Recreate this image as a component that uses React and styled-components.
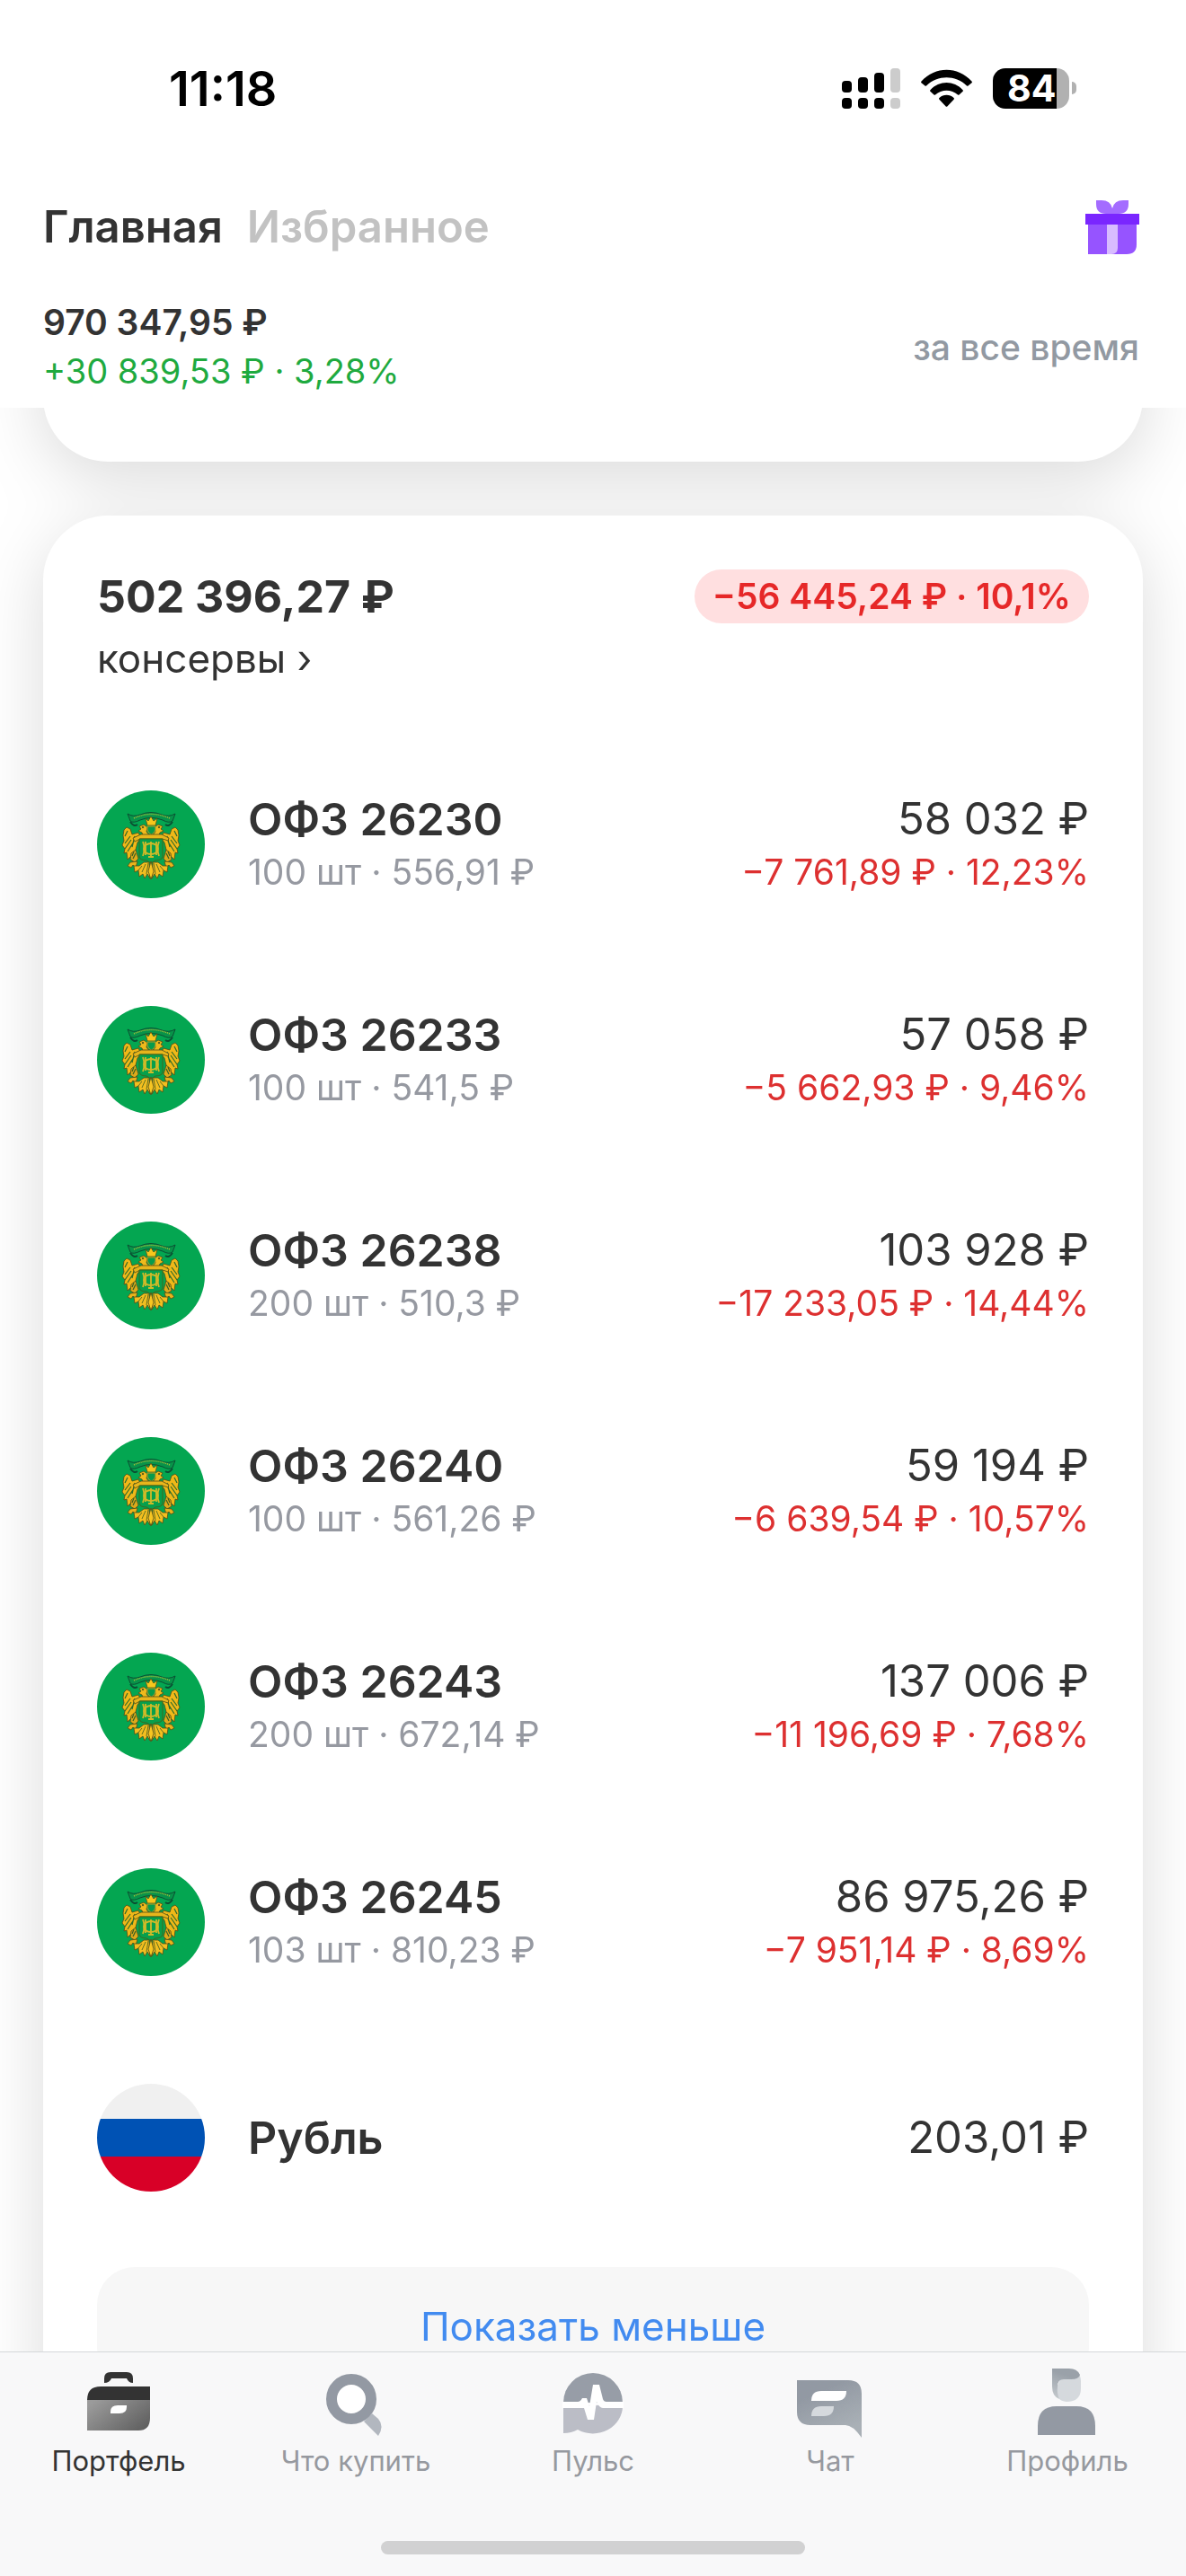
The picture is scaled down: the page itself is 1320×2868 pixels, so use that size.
import styled, { createGlobalStyle } from 'styled-components';

const GlobalStyle = createGlobalStyle`
	* {
		box-sizing: border-box;
	}
	body {
		margin: 0;
		background-color: #ffffff;
		color: #333333;
		font-family: Inter, 'Liberation Sans', sans-serif;
		-webkit-font-smoothing: antialiased;
	}
	button {
		border: none;
		padding: 0;
		background: none;
		color: inherit;
		font: inherit;
		cursor: pointer;
	}
`;

const Screen = styled.div`
	height: 100vh;
	display: flex;
	flex-direction: column;
	overflow: hidden;
`;

const Header = styled.header`
	flex: none;
	padding: 68px 52px 14px 48px;
`;

const StatusBar = styled.div`
	height: 60px;
	padding: 0 70px 0 140px;
	display: flex;
	align-items: center;
	justify-content: space-between;
`;

const Time = styled.time`
	color: #000000;
	font-size: 54px;
	font-weight: 600;
`;

const StatusIcons = styled.div`
	display: flex;
	align-items: center;
	gap: 23px;
`;

const BatteryBox = styled.div`
	display: flex;
	align-items: center;
	gap: 3px;
`;

const BatteryLevel = styled.div`
	width: 85px;
	height: 45px;
	padding-left: 16px;
	border-radius: 14px;
	background: linear-gradient(to right, #000000 84%, #b1b1b1 84%);
	color: #ffffff;
	font-size: 41px;
	font-weight: 700;
	line-height: 45px;
`;

const BatteryNub = styled.div`
	width: 5px;
	height: 14px;
	border-radius: 0 5px 5px 0;
	background-color: #b1b1b1;
`;

const HeaderRow = styled.div`
	margin-top: ${(props) => props.$top}px;
	display: flex;
	align-items: center;
	justify-content: space-between;
`;

const Tabs = styled.div`
	display: flex;
	gap: 27px;
`;

const TabButton = styled.button`
	color: ${(props) => (props.$active ? '#333333' : '#c2c2c2')};
	font-size: 49px;
	font-weight: 600;
	line-height: 60px;
`;

const GiftButton = styled.button`
	width: 60px;
	height: 60px;
`;

const Total = styled.div`
	color: ${(props) => (props.$profit ? '#1faa3f' : '#333333')};
	font-size: ${(props) => (props.$profit ? 38 : 39)}px;
	font-weight: ${(props) => (props.$profit ? 400 : 600)};
	line-height: 54px;
`;

const PeriodButton = styled.button`
	color: #9299a2;
	font-size: 39px;
	font-weight: 500;
`;

const Feed = styled.main`
	flex: 1;
	min-height: 0;
	overflow: hidden;
`;

const Cards = styled.div`
	padding: 0 48px;
	display: flex;
	flex-direction: column;
	gap: 60px;
	filter: drop-shadow(0 18px 36px rgba(0, 0, 0, 0.14));
`;

const Card = styled.section`
	padding: 60px;
	border-radius: 72px;
	background-color: #ffffff;
`;

/* the previous card, mostly scrolled away under the header */
const ScrolledCard = styled(Card)`
	height: 240px;
	margin-top: -180px;
`;

const CardHead = styled.div`
	display: flex;
	align-items: center;
	justify-content: space-between;
`;

const CardTotal = styled.h2`
	margin: 0;
	font-size: 50px;
	font-weight: 700;
	line-height: 60px;
`;

const Badge = styled.div`
	padding: 0 20px;
	border-radius: 30px;
	background-color: #ffdfe0;
	color: #e62828;
	font-size: 39px;
	font-weight: 600;
	line-height: 60px;
`;

const AccountLink = styled.a`
	display: block;
	width: fit-content;
	margin: 12px 0 60px;
	color: #333333;
	font-size: 44px;
	line-height: 54px;
	text-decoration: none;
`;

const Positions = styled.ul`
	margin: 0;
	padding: 0;
	list-style: none;
`;

const Position = styled.li`
	height: 240px;
	display: flex;
	align-items: center;
	gap: 48px;
`;

const PositionText = styled.div`
	flex: ${(props) => (props.$right ? 'none' : 1)};
	text-align: ${(props) => (props.$right ? 'right' : 'left')};
`;

const Primary = styled.div`
	font-size: ${(props) => (props.$bold ? 50 : 49)}px;
	font-weight: ${(props) => (props.$bold ? 600 : 400)};
	line-height: 62px;
`;

const Secondary = styled.div`
	color: ${(props) => (props.$loss ? '#dd3030' : '#9699a1')};
	font-size: 39px;
	line-height: 56px;
`;

const MoreButton = styled.button`
	width: 100%;
	height: 132px;
	margin-top: 24px;
	border-radius: 42px;
	background-color: #f7f7f7;
	color: #428bf0;
	font-size: 44px;
`;

const BottomBar = styled.nav`
	flex: none;
	padding: 11px 0 24px;
	border-top: 1px solid #d5d8da;
	background-color: #f8f8f9;
`;

const NavItems = styled.div`
	display: grid;
	grid-template-columns: repeat(5, 1fr);
`;

const NavButton = styled.button`
	display: flex;
	flex-direction: column;
	align-items: center;
	gap: 8px;
	color: ${(props) => (props.$active ? '#333333' : '#96999f')};
	font-size: 31px;
	line-height: 36px;
`;

const HomeIndicator = styled.div`
	width: 36%;
	max-width: 472px;
	height: 15px;
	margin: 71px auto 0;
	border-radius: 8px;
	background-color: #d1d1d2;
`;

const SignalIcon = () => (
	<svg width="65" height="45" viewBox="0 0 65 45">
		<g fill="#000">
			<rect x="0" y="14" width="11" height="13" rx="4" />
			<rect x="18" y="10" width="11" height="17" rx="4" />
			<rect x="36" y="5" width="11" height="22" rx="4" />
			<rect x="0" y="33" width="11" height="12" rx="4" />
			<rect x="18" y="33" width="11" height="12" rx="4" />
			<rect x="36" y="33" width="11" height="12" rx="4" />
		</g>
		<g fill="#ccc">
			<rect x="54" y="0" width="11" height="27" rx="4" />
			<rect x="54" y="33" width="11" height="12" rx="4" />
		</g>
	</svg>
);

const WifiIcon = () => (
	<svg width="57" height="43" viewBox="0 0 57 43">
		<path d="M0.5 13.5C16 -3.6 41 -3.6 56.5 13.5Q57.3 14.4 56.5 15.2L52.5 18.6Q51.8 19.2 51 18.4C38 6.3 19 6.3 6 18.4Q5.2 19.2 4.5 18.6L0.5 15.2Q-0.3 14.4 0.5 13.5Z" />
		<path d="M10.4 23.2C20.5 12.4 36.5 12.4 46.6 23.2Q47.4 24 46.6 24.8L42.5 28.5Q41.7 29.1 41 28.5C34 22 23 22 16 28.5Q15.3 29.1 14.5 28.5L10.4 24.8Q9.6 24 10.4 23.2Z" />
		<path d="M20.4 32C25 27.7 32 27.7 36.6 32Q37.4 32.9 36.6 33.7L29.3 41.5Q28.5 42.2 27.7 41.5L20.4 33.7Q19.6 32.9 20.4 32Z" />
	</svg>
);

const GiftIcon = () => (
	<svg width="60" height="60" viewBox="0 0 60 60">
		<path fill="#a46cff" d="M12 0h6q10 0 12 9q2 -9 12 -9h6v4q0 11 -11 11H23Q12 15 12 4z" />
		<path fill="#7a26ff" d="M0 15h60v12H0z" />
		<path fill="#9654ff" d="M3 27h54v22q0 11 -11 11H3z" />
		<path fill="#d8bcff" d="M24 27h12v26q0 7 -7 7h-5z" />
	</svg>
);

const EmblemIcon = () => (
	<svg width="120" height="120" viewBox="0 0 120 120">
		<circle cx="60" cy="60" r="60" fill="#04a651" />
		<path
			d="M34 26Q40 30 48 27Q60 22 72 27Q80 30 87 26L84 34Q80 37 73 33Q60 28 48 33Q40 37 37 34Z"
			fill="#089349"
			stroke="#0b4f33"
			strokeWidth="1"
		/>
		<path d="M41 31Q60 22 81 31" fill="none" stroke="#9dbb3a" strokeWidth="1.4" strokeDasharray="1.2 0.8" />
		<path d="M37 35q4 6 8 3M84 35q-4 6 -8 3" fill="none" stroke="#0b4f33" strokeWidth="2" />
		{/* wings are drawn once and mirrored */}
		{[1, -1].map((side) => (
			<g key={side} transform={`translate(60 0) scale(${side} 1)`} stroke="#514b16" strokeWidth="0.8">
				<path fill="#f0b818" d="M11 53L14 47L21 49L23 43L27 41L30 44L31 50L30 56L32 61L29 65L30 70L27 69L26 77L20 71L17 66L15 58Z" />
				<path fill="none" stroke="#2f6b29" strokeWidth="1.2" d="M23 51L29 59M22 55L29 65M19 57L26 68M26 45L29 51M18 51L21 63" />
				<path fill="#dda91b" d="M17 66L22 70L23 77L18 80L14 76Z" />
				<path fill="#e9b31a" d="M15 79L23 80L26 84L22 86L20 83L17 86Z" />
				<path fill="none" stroke="#385f22" strokeWidth="1.2" d="M17 70L20 76M19 68L21 73" />
				<path fill="#efba1c" d="M1 51L5 46L4 41L8 38L13 40L11 43L14 45L10 47L8 52Z" />
				<circle cx="9" cy="41" r="0.8" fill="#165b2c" />
				<path fill="#f2be20" d="M2 80L8 80L13 84L19 84L18 91L14 89L13 96L9 93L7 98L4 93L1 98Z" />
				<path fill="none" stroke="#3c5b20" d="M3 81L5 93M6 82L10 91M10 84L14 89" />
			</g>
		))}
		<path fill="#f6c71c" stroke="#534f14" strokeWidth="0.8" d="M54 31L57 34L60 29L63 34L67 31L65 39H56Z" />
		<path fill="#079b4c" stroke="#b99d24" d="M56 40h9v4q-1 4 -4.5 5q-3.5 -1 -4.5 -5z" />
		<path fill="#e7b51c" stroke="#514b16" strokeWidth="0.8" d="M40 53L49 49H72L80 53L79 56L73 54H48L42 57Z" />
		<path fill="#079f4c" stroke="#3f661d" strokeWidth="1" d="M47 54h26v20q-1 4 -8 4l-5 3l-5 -3q-7 0 -8 -4z" />
		<g fill="none" stroke="#d0ba28" strokeWidth="1.8">
			<ellipse cx="60" cy="65" rx="8" ry="6" />
			<path d="M60 57v18M54 57v15M66 57v15M51 57q3 8 0 16M69 57q-3 8 0 16M57 74h6" />
		</g>
		<path fill="#f7c521" stroke="#4f4d16" strokeWidth="0.8" d="M60 79L63 90L60 99L57 90Z" />
	</svg>
);

const FlagIcon = () => (
	<svg width="120" height="120" viewBox="0 0 120 120">
		<clipPath id="flag">
			<circle cx="60" cy="60" r="60" />
		</clipPath>
		<g clipPath="url(#flag)">
			<path fill="#f0f0f0" d="M0 0h120v39H0z" />
			<path fill="#0052b4" d="M0 39h120v42H0z" />
			<path fill="#d80027" d="M0 81h120v39H0z" />
		</g>
	</svg>
);

const PortfolioIcon = () => (
	<svg width="84" height="84" viewBox="0 0 84 84">
		<linearGradient id="case" x1="0" y1="0.2" x2="1" y2="0.8">
			<stop offset="0" stopColor="#9b9b9b" />
			<stop offset="1" stopColor="#606060" />
		</linearGradient>
		<path fill="#333" d="M26 23v-5q0 -7 7 -7h18q7 0 7 7v5q-5 0 -7 -5H34q-2 5 -8 5z" />
		<path fill="#333" d="M7 42q0 -15 15 -15h55v15z" />
		<path fill="url(#case)" d="M7 42h70v20q0 14 -13 14H7z" />
		<path fill="#fff" d="M33 57v-2q0 -7 8 -7h10v2q0 7 -8 7z" />
	</svg>
);

const SearchIcon = () => (
	<svg width="84" height="84" viewBox="0 0 84 84">
		<path fill="#b2b7bf" d="M51 66L60 57L67 63Q74 71 67 82Z" />
		<circle cx="37" cy="41" r="22" fill="#fff" stroke="#9399a3" strokeWidth="12" />
	</svg>
);

const PulseIcon = () => (
	<svg width="84" height="84" viewBox="0 0 84 84">
		<path fill="#979da7" d="M9 45A33 33 0 0 1 75 45z" />
		<path fill="#bbbdc6" d="M9 48h66A33 31 0 0 1 25 75Q18 79 9 79z" />
		<path
			fill="#fff"
			d="M8 44H25Q28 44 30 40H35L38 49L42 25H49L53 41Q54 44 57 44H76V51H53Q49 51 46 44L43 64H36L32 51H8z"
		/>
	</svg>
);

const ChatIcon = () => (
	<svg width="84" height="84" viewBox="0 0 84 84">
		<linearGradient id="chat" x1="0" y1="0" x2="0.5" y2="1">
			<stop offset="0.3" stopColor="#9299a3" />
			<stop offset="1" stopColor="#a9b0b6" />
		</linearGradient>
		<path fill="url(#chat)" d="M5 20h57q15 0 15 15v49Q67 70 59 70H20Q5 70 5 55z" />
		<path fill="#fff" d="M21 43q0 -11 11 -11h28q0 11 -11 11z" />
		<path fill="#d5d9dd" d="M21 60q0 -11 11 -11h14q0 11 -11 11z" />
	</svg>
);

const ProfileIcon = () => (
	<svg width="84" height="84" viewBox="0 0 84 84">
		<linearGradient id="hair" x1="0.5" y1="0" x2="0.2" y2="1">
			<stop offset="0.2" stopColor="#9aa1a9" />
			<stop offset="1" stopColor="#c3c8cc" />
		</linearGradient>
		<path fill="#d5d9dd" d="M40 9q17 -1 17 12v8q0 15 -16 15q-12 -1 -12 -15z" />
		<path fill="url(#hair)" d="M25 7h19Q53 7 56 14Q55 19 46 19H38Q31 19 31 27Q30 34 33 41Q25 38 25 27z" />
		<path fill="#9399a3" d="M9 81V71Q9 49 30 49H52Q73 49 73 71V81z" />
	</svg>
);

const positions = [
	{ name: 'ОФЗ 26230', details: '100 шт · 556,91 ₽', value: '58 032 ₽', change: '−7 761,89 ₽ · 12,23%' },
	{ name: 'ОФЗ 26233', details: '100 шт · 541,5 ₽', value: '57 058 ₽', change: '−5 662,93 ₽ · 9,46%' },
	{ name: 'ОФЗ 26238', details: '200 шт · 510,3 ₽', value: '103 928 ₽', change: '−17 233,05 ₽ · 14,44%' },
	{ name: 'ОФЗ 26240', details: '100 шт · 561,26 ₽', value: '59 194 ₽', change: '−6 639,54 ₽ · 10,57%' },
	{ name: 'ОФЗ 26243', details: '200 шт · 672,14 ₽', value: '137 006 ₽', change: '−11 196,69 ₽ · 7,68%' },
	{ name: 'ОФЗ 26245', details: '103 шт · 810,23 ₽', value: '86 975,26 ₽', change: '−7 951,14 ₽ · 8,69%' },
	{ name: 'Рубль', value: '203,01 ₽' },
];

const navItems = [
	{ label: 'Портфель', Icon: PortfolioIcon },
	{ label: 'Что купить', Icon: SearchIcon },
	{ label: 'Пульс', Icon: PulseIcon },
	{ label: 'Чат', Icon: ChatIcon },
	{ label: 'Профиль', Icon: ProfileIcon },
];

const App = () => {
	return (
		<Screen>
			<GlobalStyle />
			<Header>
				<StatusBar>
					<Time>11:18</Time>
					<StatusIcons>
						<SignalIcon />
						<WifiIcon />
						<BatteryBox>
							<BatteryLevel>84</BatteryLevel>
							<BatteryNub />
						</BatteryBox>
					</StatusIcons>
				</StatusBar>
				<HeaderRow $top={95}>
					<Tabs>
						<TabButton $active>Главная</TabButton>
						<TabButton>Избранное</TabButton>
					</Tabs>
					<GiftButton aria-label="Подарок">
						<GiftIcon />
					</GiftButton>
				</HeaderRow>
				<HeaderRow $top={49}>
					<div>
						<Total>970 347,95 ₽</Total>
						<Total $profit>+30 839,53 ₽ · 3,28%</Total>
					</div>
					<PeriodButton>за все время</PeriodButton>
				</HeaderRow>
			</Header>
			<Feed>
				<Cards>
					<ScrolledCard />
					<Card>
						<CardHead>
							<CardTotal>502 396,27 ₽</CardTotal>
							<Badge>−56 445,24 ₽ · 10,1%</Badge>
						</CardHead>
						<AccountLink href="#account">консервы ›</AccountLink>
						<Positions>
							{positions.map((item) => (
								<Position key={item.name}>
									{item.details ? <EmblemIcon /> : <FlagIcon />}
									<PositionText>
										<Primary $bold>{item.name}</Primary>
										{item.details && <Secondary>{item.details}</Secondary>}
									</PositionText>
									<PositionText $right>
										<Primary>{item.value}</Primary>
										{item.change && <Secondary $loss>{item.change}</Secondary>}
									</PositionText>
								</Position>
							))}
						</Positions>
						<MoreButton>Показать меньше</MoreButton>
					</Card>
				</Cards>
			</Feed>
			<BottomBar>
				<NavItems>
					{navItems.map(({ label, Icon }, index) => (
						<NavButton key={label} $active={index === 0}>
							<Icon />
							{label}
						</NavButton>
					))}
				</NavItems>
				<HomeIndicator />
			</BottomBar>
		</Screen>
	);
};

export default App;
